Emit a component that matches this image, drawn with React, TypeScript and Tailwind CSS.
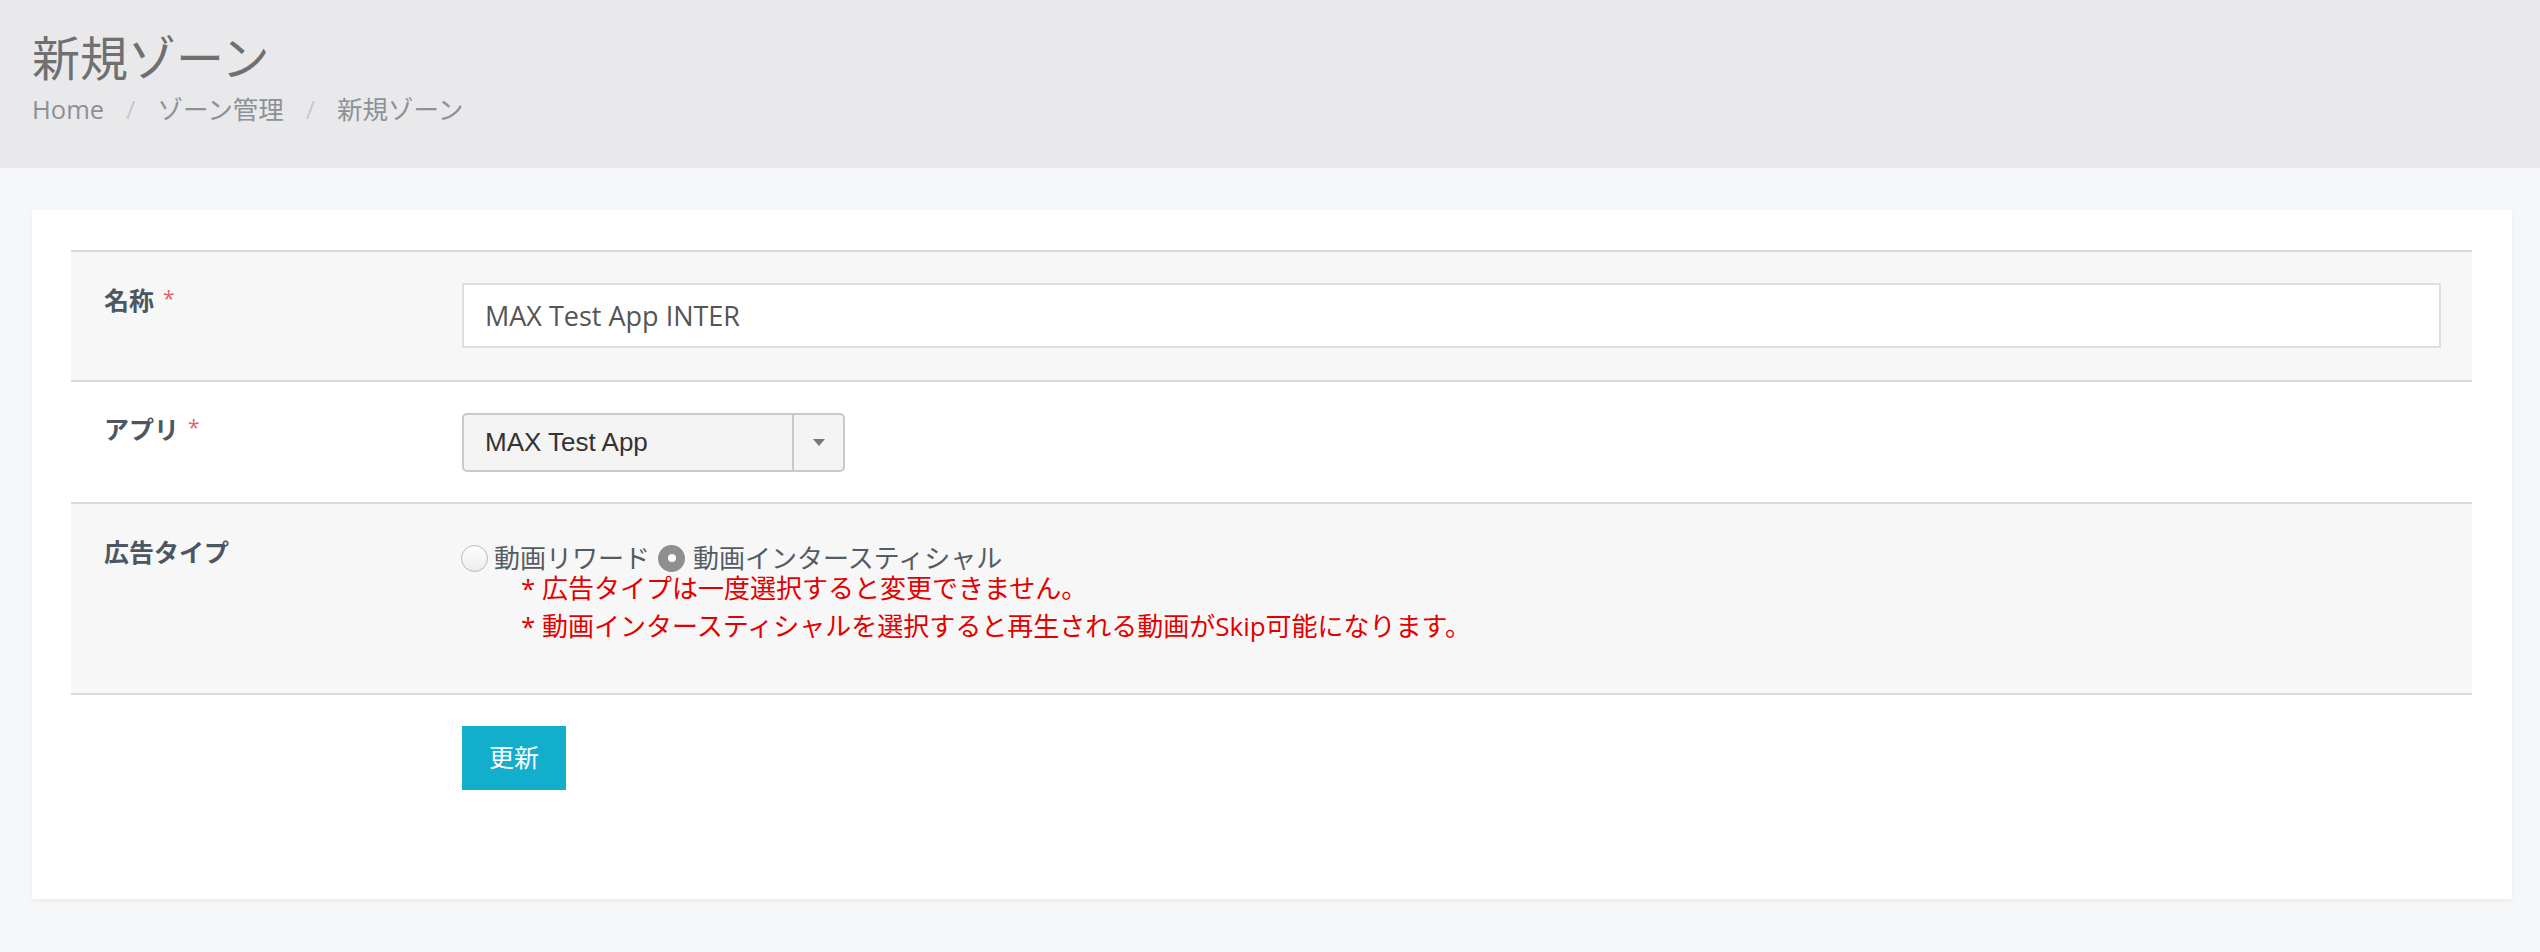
const SANS = "font-['Open_Sans','Noto_Sans_CJK_JP',sans-serif]";

function Req() {
  return <span className="ml-[9px] relative -top-[4px] text-[21px] text-[#e0636b] font-normal">*</span>;
}

function Radio({ checked }: { checked?: boolean }) {
  if (checked) {
    return (
      <span className="inline-flex h-[27px] w-[27px] shrink-0 items-center justify-center rounded-full bg-[#8f8f8f]">
        <span className="h-[8px] w-[8px] rounded-full bg-white" />
      </span>
    );
  }
  return (
    <span className="inline-block h-[27px] w-[27px] shrink-0 rounded-full border-[1.5px] border-[#b8b8b8] bg-gradient-to-b from-white to-[#ececec]" />
  );
}

export default function App() {
  return (
    <div className={`min-h-screen bg-[#f6f7f9] ${SANS}`}>
      {/* ヘッダー */}
      <div className="h-[168px] bg-[#e9e9eb] px-[32px] pt-[34px]">
        <h1 className="text-[48px] leading-[48px] text-[#707070]">新規ゾーン</h1>
        <div className="mt-[10px] flex items-center text-[25.5px] leading-[34px] text-[#8c9196]">
          <span>Home</span>
          <span className="mx-[22px] text-[#c7c9cc]">/</span>
          <span>ゾーン管理</span>
          <span className="mx-[22px] text-[#c7c9cc]">/</span>
          <span>新規ゾーン</span>
        </div>
      </div>

      <div className="pl-[32px] pr-[28px] pt-[42px] pb-[52px]">
        <div className="bg-white pl-[39px] pr-[40px] pt-[40px] pb-[109px] shadow-[0_2px_4px_rgba(0,0,0,0.05)]">
          <div className="border-t-2 border-[#dadada]">
            {/* 名称 */}
            <div className="flex border-b-2 border-[#dadada] bg-[#f7f7f7]">
              <div className="w-[359px] shrink-0 pl-[33px] pt-[31px] text-[25px] leading-[34px] font-bold text-[#4c5761]">
                名称<Req />
              </div>
              <div className="flex-1 pt-[31px] pr-[31px] pb-[32px] pl-[32px]">
                <input
                  readOnly
                  value="MAX Test App INTER"
                  className="h-[65px] w-full border-2 border-[#dedfdf] bg-white px-[21px] text-[27px] text-[#555555] outline-none"
                />
              </div>
            </div>

            {/* アプリ */}
            <div className="flex border-b-2 border-[#dadada] bg-white">
              <div className="w-[359px] shrink-0 pl-[33px] pt-[30px] text-[25px] leading-[34px] font-bold text-[#4c5761]">
                アプリ<Req />
              </div>
              <div className="flex-1 pt-[31px] pb-[30px] pl-[32px]">
                <div className="flex h-[59px] w-[383px] items-stretch rounded-[5px] border-2 border-[#c9c9c9] bg-[#f4f4f4] font-['Liberation_Sans','Noto_Sans_CJK_JP',sans-serif]">
                  <div className="flex flex-1 items-center pl-[21px] text-[26px] text-[#333333]">MAX Test App</div>
                  <div className="flex w-[51px] items-center justify-center border-l-2 border-[#c9c9c9]">
                    <svg width="12" height="7" viewBox="0 0 12 7">
                      <path d="M0 0h12L6 7z" fill="#777777" />
                    </svg>
                  </div>
                </div>
              </div>
            </div>

            {/* 広告タイプ */}
            <div className="flex border-b-2 border-[#dadada] bg-[#f7f7f7]">
              <div className="w-[359px] shrink-0 pl-[33px] pt-[31px] text-[25px] leading-[34px] font-bold text-[#4c5761]">
                広告タイプ
              </div>
              <div className="flex-1 pt-[41px] pb-[48px] pl-[31px] text-[26px] leading-[38px]">
                <div className="flex h-[26px] items-center leading-[26px] text-[#555b61]">
                  <Radio />
                  <span className="ml-[6px] block">動画リワード</span>
                  <span className="ml-[8px] flex items-center">
                    <Radio checked />
                  </span>
                  <span className="ml-[8px] block">動画インタースティシャル</span>
                </div>
                <div className="-mt-[2px] pl-[60px] text-[#e30000]">
                  <p>* 広告タイプは一度選択すると変更できません。</p>
                  <p>* 動画インタースティシャルを選択すると再生される動画がSkip可能になります。</p>
                </div>
              </div>
            </div>

            {/* ボタン */}
            <div className="flex">
              <div className="w-[359px] shrink-0" />
              <div className="pt-[31px] pl-[32px]">
                <button className="h-[64px] w-[104px] bg-[#13aecb] text-[25px] text-white">更新</button>
              </div>
            </div>
          </div>
        </div>
      </div>
    </div>
  );
}
